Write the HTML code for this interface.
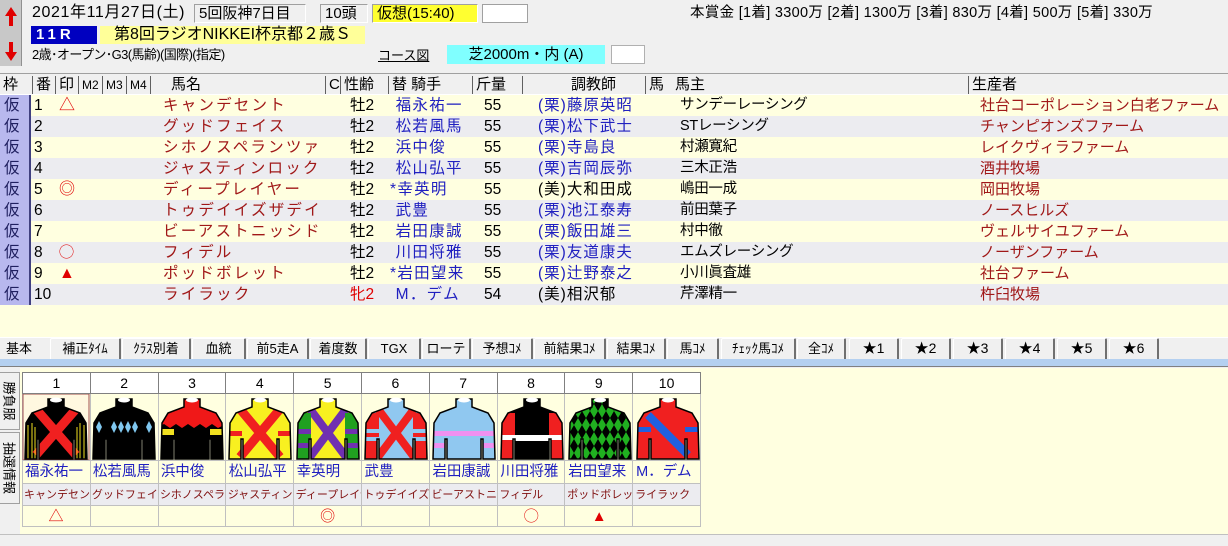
<!DOCTYPE html>
<html><head><meta charset="utf-8">
<style>
*{margin:0;padding:0;box-sizing:border-box}
body{width:1228px;height:546px;overflow:hidden;background:#f0f0f0;font-family:"Liberation Sans","Noto Sans CJK JP",sans-serif;position:relative;color:#000}
.a{position:absolute;white-space:nowrap}
.box{position:absolute;border:1px solid #a0a0a0;border-right-color:#fff;border-bottom-color:#fff;font-size:15px;line-height:18px;padding-left:4px}
#tbl{position:absolute;left:0;top:73px;width:1228px;height:265px;background:#ffffe0}
.hd{position:absolute;left:0;top:0;width:1228px;height:22px;background:#f0f0f0;border-top:1px solid #a0a0a0;border-bottom:1px solid #fff;font-size:15px;line-height:21px}
.hd span{position:absolute;top:0;border-left:1px solid #606060;height:18px;top:2px;line-height:18px;padding-left:3px}
.r{position:absolute;left:0;width:1228px;height:21px;font-size:15.5px;line-height:21px}
.r.g{background:#ececf0}
.r span{position:absolute;top:0}
.w{left:0;width:31px;height:21px;background:#b8b8ee;border-right:2px solid #404080;padding-left:4px;color:#202060}
.n{left:34px}.m{left:59px;color:#e00000;font-size:16px}
.h{left:163px;color:#a01818;letter-spacing:2.2px}
.s{left:350px}.j{left:390px;color:#2020c0;letter-spacing:1.3px}
.k{left:484px}.t{left:538px;color:#2020c0;letter-spacing:1px}
.o{left:680px;font-size:14.5px;letter-spacing:-.3px}
.b{left:980px;color:#a01818;font-size:15px}
.tab{position:absolute;top:338px;height:21px;background:#f0f0f0;border:1px solid #fff;border-right:2px solid #707070;border-bottom:none;font-size:13px;line-height:19px;text-align:center;border-radius:2px 2px 0 0}
#grid{position:absolute;left:22px;top:372px;width:679px;height:156px;background:#ffffe0}
.c{position:absolute;border-right:1px solid #b0b0b0;border-bottom:1px solid #c0c0c0;font-size:13px;text-align:center;overflow:hidden;white-space:nowrap}
.vt{position:absolute;left:0;width:20px;border:1px solid #a0a0a0;border-left:none;background:#f0f0f0;overflow:hidden}
.vt div{position:absolute;left:50%;top:50%;transform:translate(-50%,-50%) rotate(90deg);font-size:13px;white-space:nowrap}
</style></head><body>
<div class="a" style="left:0;top:0;width:22px;height:66px;background:#c8c8c8;border-right:1px solid #909090"></div>
<svg class="a" style="left:4px;top:6px" width="14" height="56"><path d="M7,1 L13,10 L9,10 L9,20 L5,20 L5,10 L1,10 Z" fill="#e00000"/><path d="M7,55 L13,46 L9,46 L9,36 L5,36 L5,46 L1,46 Z" fill="#e00000"/></svg>
<div class="a" style="left:32px;top:4px;font-size:16px;line-height:18px;letter-spacing:.6px">2021年11月27日(土)</div>
<div class="box" style="left:194px;top:4px;width:112px;height:19px">5回阪神7日目</div>
<div class="box" style="left:320px;top:4px;width:48px;height:19px">10頭</div>
<div class="box" style="left:372px;top:4px;width:106px;height:19px;background:#ffff30">仮想(15:40)</div>
<div class="a" style="left:482px;top:4px;width:46px;height:19px;background:#fff;border:1px solid #a0a0a0"></div>
<div class="a" style="left:690px;top:4px;font-size:14.5px;line-height:18px;letter-spacing:.3px">本賞金 [1着] 3300万 [2着] 1300万 [3着] 830万 [4着] 500万 [5着] 330万</div>
<div class="a" style="left:31px;top:26px;width:66px;height:18px;background:#0000c0;color:#fff;font-size:15px;line-height:18px;padding-left:5px;letter-spacing:4px;font-weight:bold">11R</div>
<div class="a" style="left:100px;top:26px;width:265px;height:18px;background:#ffff99;font-size:16px;line-height:18px;padding-left:14px">第8回ラジオNIKKEI杯京都２歳Ｓ</div>
<div class="a" style="left:32px;top:46px;font-size:13px;line-height:18px;letter-spacing:-.6px">2歳･オープン･G3(馬齢)(国際)(指定)</div>
<div class="a" style="left:378px;top:48px;font-size:13px;line-height:16px;text-decoration:underline">コース図</div>
<div class="a" style="left:447px;top:45px;width:158px;height:19px;background:#80ffff;font-size:15px;line-height:19px;text-align:center">芝2000m・内 (A)</div>
<div class="a" style="left:611px;top:45px;width:34px;height:19px;background:#fff;border:1px solid #b0b0b0"></div>
<div id="tbl">
<div class="hd">
<span style="left:0;border:none">枠</span><span style="left:32px">番</span><span style="left:55px">印</span><span style="left:78px;font-size:12px">M2</span><span style="left:102px;font-size:12px">M3</span><span style="left:126px;font-size:12px">M4</span><span style="left:150px;padding-left:20px">馬名</span><span style="left:325px">C</span><span style="left:340px">性齢</span><span style="left:388px">替 騎手</span><span style="left:472px">斤量</span><span style="left:522px;padding-left:48px">調教師</span><span style="left:645px;width:24px;overflow:hidden">馬齢</span><span style="left:672px;border:none">馬主</span><span style="left:968px">生産者</span>
</div>
<div class="r" style="top:22px"><span class="w">仮</span><span class="n">1</span><span class="m">△</span><span class="h">キャンデセント</span><span class="s">牡2</span><span class="j">&nbsp;福永祐一</span><span class="k">55</span><span class="t">(栗)藤原英昭</span><span class="o">サンデーレーシング</span><span class="b">社台コーポレーション白老ファーム</span></div>
<div class="r g" style="top:43px"><span class="w">仮</span><span class="n">2</span><span class="h">グッドフェイス</span><span class="s">牡2</span><span class="j">&nbsp;松若風馬</span><span class="k">55</span><span class="t">(栗)松下武士</span><span class="o">STレーシング</span><span class="b">チャンピオンズファーム</span></div>
<div class="r" style="top:64px"><span class="w">仮</span><span class="n">3</span><span class="h">シホノスペランツァ</span><span class="s">牡2</span><span class="j">&nbsp;浜中俊</span><span class="k">55</span><span class="t">(栗)寺島良</span><span class="o">村瀬寛紀</span><span class="b">レイクヴィラファーム</span></div>
<div class="r g" style="top:85px"><span class="w">仮</span><span class="n">4</span><span class="h">ジャスティンロック</span><span class="s">牡2</span><span class="j">&nbsp;松山弘平</span><span class="k">55</span><span class="t">(栗)吉岡辰弥</span><span class="o">三木正浩</span><span class="b">酒井牧場</span></div>
<div class="r" style="top:106px"><span class="w">仮</span><span class="n">5</span><span class="m">◎</span><span class="h">ディープレイヤー</span><span class="s">牡2</span><span class="j">*幸英明</span><span class="k">55</span><span class="t" style="color:#000">(美)大和田成</span><span class="o">嶋田一成</span><span class="b">岡田牧場</span></div>
<div class="r g" style="top:127px"><span class="w">仮</span><span class="n">6</span><span class="h">トゥデイイズザデイ</span><span class="s">牡2</span><span class="j">&nbsp;武豊</span><span class="k">55</span><span class="t">(栗)池江泰寿</span><span class="o">前田葉子</span><span class="b">ノースヒルズ</span></div>
<div class="r" style="top:148px"><span class="w">仮</span><span class="n">7</span><span class="h">ビーアストニッシド</span><span class="s">牡2</span><span class="j">&nbsp;岩田康誠</span><span class="k">55</span><span class="t">(栗)飯田雄三</span><span class="o">村中徹</span><span class="b">ヴェルサイユファーム</span></div>
<div class="r g" style="top:169px"><span class="w">仮</span><span class="n">8</span><span class="m" style="font-size:15px">◯</span><span class="h">フィデル</span><span class="s">牡2</span><span class="j">&nbsp;川田将雅</span><span class="k">55</span><span class="t">(栗)友道康夫</span><span class="o">エムズレーシング</span><span class="b">ノーザンファーム</span></div>
<div class="r" style="top:190px"><span class="w">仮</span><span class="n">9</span><span class="m">▲</span><span class="h">ポッドボレット</span><span class="s">牡2</span><span class="j">*岩田望来</span><span class="k">55</span><span class="t">(栗)辻野泰之</span><span class="o">小川眞査雄</span><span class="b">社台ファーム</span></div>
<div class="r g" style="top:211px"><span class="w">仮</span><span class="n">10</span><span class="h">ライラック</span><span class="s" style="color:#e00000">牝2</span><span class="j">&nbsp;M．デム</span><span class="k">54</span><span class="t" style="color:#000">(美)相沢郁</span><span class="o">芹澤精一</span><span class="b">杵臼牧場</span></div>
</div>
<div class="a" style="left:0;top:337px;width:1228px;height:1px;background:#fff"></div>
<div class="a" style="left:0;top:339px;width:48px;height:21px;font-size:13px;line-height:20px;padding-left:6px;background:#f0f0f0">基本</div>
<div class="tab" style="left:50px;width:71px">補正ﾀｲﾑ</div>
<div class="tab" style="left:122px;width:69px">ｸﾗｽ別着</div>
<div class="tab" style="left:192px;width:54px">血統</div>
<div class="tab" style="left:247px;width:62px">前5走A</div>
<div class="tab" style="left:310px;width:57px">着度数</div>
<div class="tab" style="left:368px;width:53px">TGX</div>
<div class="tab" style="left:422px;width:49px">ローテ</div>
<div class="tab" style="left:472px;width:61px">予想ｺﾒ</div>
<div class="tab" style="left:534px;width:72px">前結果ｺﾒ</div>
<div class="tab" style="left:607px;width:59px">結果ｺﾒ</div>
<div class="tab" style="left:667px;width:52px">馬ｺﾒ</div>
<div class="tab" style="left:721px;width:75px">ﾁｪｯｸ馬ｺﾒ</div>
<div class="tab" style="left:797px;width:49px">全ｺﾒ</div>
<div class="tab" style="left:849px;width:50px;font-size:14px">★1</div>
<div class="tab" style="left:901px;width:50px;font-size:14px">★2</div>
<div class="tab" style="left:953px;width:50px;font-size:14px">★3</div>
<div class="tab" style="left:1005px;width:50px;font-size:14px">★4</div>
<div class="tab" style="left:1057px;width:50px;font-size:14px">★5</div>
<div class="tab" style="left:1109px;width:50px;font-size:14px">★6</div>
<div class="a" style="left:0;top:359px;width:1228px;height:8px;background:#b4d0f0;border-bottom:1px solid #808080"></div>
<div class="a" style="left:20px;top:368px;width:1208px;height:166px;background:#ffffe0"></div>
<div class="vt" style="top:372px;height:58px"><div>勝負服</div></div>
<div class="vt" style="top:432px;height:72px"><div>抽選情報</div></div>
<div id="grid">
<div class="c" style="left:0;top:0;width:679px;height:22px;background:#fff;border:1px solid #808080"></div>
</div>
<div class="a" style="left:22px;top:372px;width:679px;height:156px;font-size:14px">
 <div style="position:absolute;left:0;top:0;width:679px;height:22px;display:flex;border-top:1px solid #808080"><div style="flex:1;text-align:center;line-height:21px;border-right:1px solid #808080;border-left:1px solid #808080">1</div><div style="flex:1;text-align:center;line-height:21px;border-right:1px solid #808080">2</div><div style="flex:1;text-align:center;line-height:21px;border-right:1px solid #808080">3</div><div style="flex:1;text-align:center;line-height:21px;border-right:1px solid #808080">4</div><div style="flex:1;text-align:center;line-height:21px;border-right:1px solid #808080">5</div><div style="flex:1;text-align:center;line-height:21px;border-right:1px solid #808080">6</div><div style="flex:1;text-align:center;line-height:21px;border-right:1px solid #808080">7</div><div style="flex:1;text-align:center;line-height:21px;border-right:1px solid #808080">8</div><div style="flex:1;text-align:center;line-height:21px;border-right:1px solid #808080">9</div><div style="flex:1;text-align:center;line-height:21px;border-right:1px solid #808080">10</div></div>
 <div style="position:absolute;left:0;top:88px;width:679px;height:23px;display:flex;color:#2020c0;font-size:14.5px;line-height:23px;border-top:1px solid #c0c0c0"><div style="flex:1;padding-left:3px;overflow:hidden;white-space:nowrap">福永祐一</div><div style="flex:1;padding-left:3px">松若風馬</div><div style="flex:1;padding-left:3px">浜中俊</div><div style="flex:1;padding-left:3px">松山弘平</div><div style="flex:1;padding-left:3px">幸英明</div><div style="flex:1;padding-left:3px">武豊</div><div style="flex:1;padding-left:3px">岩田康誠</div><div style="flex:1;padding-left:3px">川田将雅</div><div style="flex:1;padding-left:3px">岩田望来</div><div style="flex:1;padding-left:3px">M．デム</div></div>
 <div style="position:absolute;left:0;top:111px;width:679px;height:22px;display:flex;color:#801010;font-size:11px;line-height:22px;background:#ececf0;border-top:1px solid #c0c0c0"><div style="flex:1;overflow:hidden;white-space:nowrap;padding-left:2px">キャンデセント</div><div style="flex:1;overflow:hidden;white-space:nowrap;padding-left:2px">グッドフェイス</div><div style="flex:1;overflow:hidden;white-space:nowrap;padding-left:2px">シホノスペランツァ</div><div style="flex:1;overflow:hidden;white-space:nowrap;padding-left:2px">ジャスティンロック</div><div style="flex:1;overflow:hidden;white-space:nowrap;padding-left:2px">ディープレイヤー</div><div style="flex:1;overflow:hidden;white-space:nowrap;padding-left:2px">トゥデイイズザデイ</div><div style="flex:1;overflow:hidden;white-space:nowrap;padding-left:2px">ビーアストニッシド</div><div style="flex:1;overflow:hidden;white-space:nowrap;padding-left:2px">フィデル</div><div style="flex:1;overflow:hidden;white-space:nowrap;padding-left:2px">ポッドボレット</div><div style="flex:1;overflow:hidden;white-space:nowrap;padding-left:2px">ライラック</div></div>
 <div style="position:absolute;left:0;top:133px;width:679px;height:22px;display:flex;color:#e00000;font-size:15px;line-height:22px;text-align:center;border-top:1px solid #c0c0c0;border-bottom:1px solid #c0c0c0"><div style="flex:1">△</div><div style="flex:1"></div><div style="flex:1"></div><div style="flex:1"></div><div style="flex:1">◎</div><div style="flex:1"></div><div style="flex:1"></div><div style="flex:1">◯</div><div style="flex:1">▲</div><div style="flex:1"></div></div>
 <div style="position:absolute;left:0;top:22px;width:679px;height:133px;display:flex;pointer-events:none"><div style="flex:1;border-left:1px solid #c0c0c0;border-right:1px solid #c0c0c0"></div><div style="flex:1;border-right:1px solid #c0c0c0"></div><div style="flex:1;border-right:1px solid #c0c0c0"></div><div style="flex:1;border-right:1px solid #c0c0c0"></div><div style="flex:1;border-right:1px solid #c0c0c0"></div><div style="flex:1;border-right:1px solid #c0c0c0"></div><div style="flex:1;border-right:1px solid #c0c0c0"></div><div style="flex:1;border-right:1px solid #c0c0c0"></div><div style="flex:1;border-right:1px solid #c0c0c0"></div><div style="flex:1;border-right:1px solid #c0c0c0"></div></div>
</div>
<svg class="a" style="left:22px;top:394px" width="679" height="66">
<defs>
<clipPath id="jk"><path d="M24,4 L40,4 L40,12 L56,18 L62,28 L63,64 L51,64 L51,44 L49,44 L49,64 L15,64 L15,44 L13,44 L13,64 L1,64 L2,28 L8,18 L24,12 Z"/></clipPath>
<path id="ol" d="M24,4 L40,4 L40,12 L56,18 L62,28 L63,64 L51,64 L51,44 L49,44 L49,64 L15,64 L15,44 L13,44 L13,64 L1,64 L2,28 L8,18 L24,12 Z" fill="none" stroke="#000" stroke-width="1.5"/>
</defs>
<rect x="1" y="0" width="66" height="66" fill="#fff8e0" stroke="#a05050"/>
<svg x="2" y="1" width="64" height="65"><g clip-path="url(#jk)"><rect width="64" height="65" fill="#000"/><path d="M12,14 L52,60 M52,14 L12,60" stroke="#f02020" stroke-width="9"/><path d="M4,30 L4,64 M8,28 L8,64 M11,32 L11,64 M53,32 L53,64 M56,28 L56,64 M60,30 L60,64" stroke="#f0e020" stroke-width="1"/></g><use href="#ol"/><ellipse cx="32" cy="5" rx="6" ry="2.5" fill="#fff"/></svg>
<svg x="70" y="1" width="64" height="65"><g clip-path="url(#jk)"><rect width="64" height="65" fill="#000"/><path d="M4,32 L7,26 L10,32 L7,38Z M19,32 L22,26 L25,32 L22,38Z M26,32 L29,26 L32,32 L29,38Z M33,32 L36,26 L39,32 L36,38Z M40,32 L43,26 L46,32 L43,38Z M54,32 L57,26 L60,32 L57,38Z" fill="#80c8f0"/></g><use href="#ol"/><ellipse cx="32" cy="5" rx="6" ry="2.5" fill="#fff"/></svg>
<svg x="138" y="1" width="64" height="65"><g clip-path="url(#jk)"><rect width="64" height="65" fill="#000"/><path d="M0,0 H64 V30 L58,33 L52,29 L46,33 L40,29 L34,33 L28,29 L22,33 L16,29 L10,33 L4,29 L0,31Z" fill="#f01818"/><rect x="0" y="34" width="14" height="6" fill="#f0e020"/><rect x="50" y="34" width="14" height="6" fill="#f0e020"/></g><use href="#ol"/><ellipse cx="32" cy="5" rx="6" ry="2.5" fill="#fff"/></svg>
<svg x="206" y="1" width="64" height="65"><g clip-path="url(#jk)"><rect width="64" height="65" fill="#f8f020"/><path d="M12,14 L52,62 M52,14 L12,62" stroke="#f02020" stroke-width="9"/><rect x="0" y="36" width="14" height="5" fill="#f02020"/><rect x="50" y="36" width="14" height="5" fill="#f02020"/></g><use href="#ol"/><ellipse cx="32" cy="5" rx="6" ry="2.5" fill="#fff"/></svg>
<svg x="274" y="1" width="64" height="65"><g clip-path="url(#jk)"><rect width="64" height="65" fill="#f8f020"/><path d="M14,14 L50,62 M50,14 L14,62" stroke="#7030b0" stroke-width="8"/><rect x="0" y="18" width="15" height="47" fill="#20a020"/><rect x="49" y="18" width="15" height="47" fill="#20a020"/><rect x="0" y="34" width="15" height="5" fill="#7030b0"/><rect x="49" y="34" width="15" height="5" fill="#7030b0"/><rect x="0" y="48" width="15" height="5" fill="#7030b0"/><rect x="49" y="48" width="15" height="5" fill="#7030b0"/></g><use href="#ol"/><ellipse cx="32" cy="5" rx="6" ry="2.5" fill="#fff"/></svg>
<svg x="342" y="1" width="64" height="65"><g clip-path="url(#jk)"><rect width="64" height="65" fill="#90c8f0"/><path d="M14,14 L50,62 M50,14 L14,62" stroke="#f02020" stroke-width="8"/><rect x="0" y="18" width="15" height="47" fill="#f02020"/><rect x="49" y="18" width="15" height="47" fill="#f02020"/><rect x="0" y="34" width="15" height="4" fill="#90c8f0"/><rect x="49" y="34" width="15" height="4" fill="#90c8f0"/><rect x="0" y="42" width="15" height="4" fill="#90c8f0"/><rect x="49" y="42" width="15" height="4" fill="#90c8f0"/></g><use href="#ol"/><ellipse cx="32" cy="5" rx="6" ry="2.5" fill="#fff"/></svg>
<svg x="410" y="1" width="64" height="65"><g clip-path="url(#jk)"><rect width="64" height="65" fill="#90c8f0"/><rect x="0" y="36" width="64" height="5" fill="#f090f0"/><rect x="0" y="48" width="15" height="5" fill="#f090f0"/><rect x="49" y="48" width="15" height="5" fill="#f090f0"/></g><use href="#ol"/><ellipse cx="32" cy="5" rx="6" ry="2.5" fill="#fff"/></svg>
<svg x="478" y="1" width="64" height="65"><g clip-path="url(#jk)"><rect width="64" height="65" fill="#000"/><rect x="0" y="18" width="15" height="47" fill="#f02020"/><rect x="49" y="18" width="15" height="47" fill="#f02020"/><rect x="15" y="40" width="34" height="6" fill="#fff"/><rect x="0" y="40" width="15" height="5" fill="#fff"/><rect x="49" y="40" width="15" height="5" fill="#fff"/></g><use href="#ol"/><ellipse cx="32" cy="5" rx="6" ry="2.5" fill="#fff"/></svg>
<svg x="546" y="1" width="64" height="65"><defs><pattern id="dm" width="8" height="14" patternUnits="userSpaceOnUse" x="2" y="2"><rect width="8" height="14" fill="#20b020"/><path d="M4,0 L8,7 L4,14 L0,7Z" fill="#000"/></pattern></defs><g clip-path="url(#jk)"><rect width="64" height="65" fill="url(#dm)"/></g><use href="#ol"/><ellipse cx="32" cy="5" rx="6" ry="2.5" fill="#fff"/></svg>
<svg x="614" y="1" width="64" height="65"><g clip-path="url(#jk)"><rect width="64" height="65" fill="#f02020"/><path d="M12,20 L52,60" stroke="#2060e0" stroke-width="8"/><rect x="0" y="32" width="15" height="5" fill="#2060e0"/><rect x="49" y="32" width="15" height="5" fill="#2060e0"/></g><use href="#ol"/><ellipse cx="32" cy="5" rx="6" ry="2.5" fill="#fff"/></svg>
</svg>
<div class="a" style="left:0;top:534px;width:1228px;height:12px;background:#f0f0f0;border-top:1px solid #c0c0c0"></div>
</body></html>
